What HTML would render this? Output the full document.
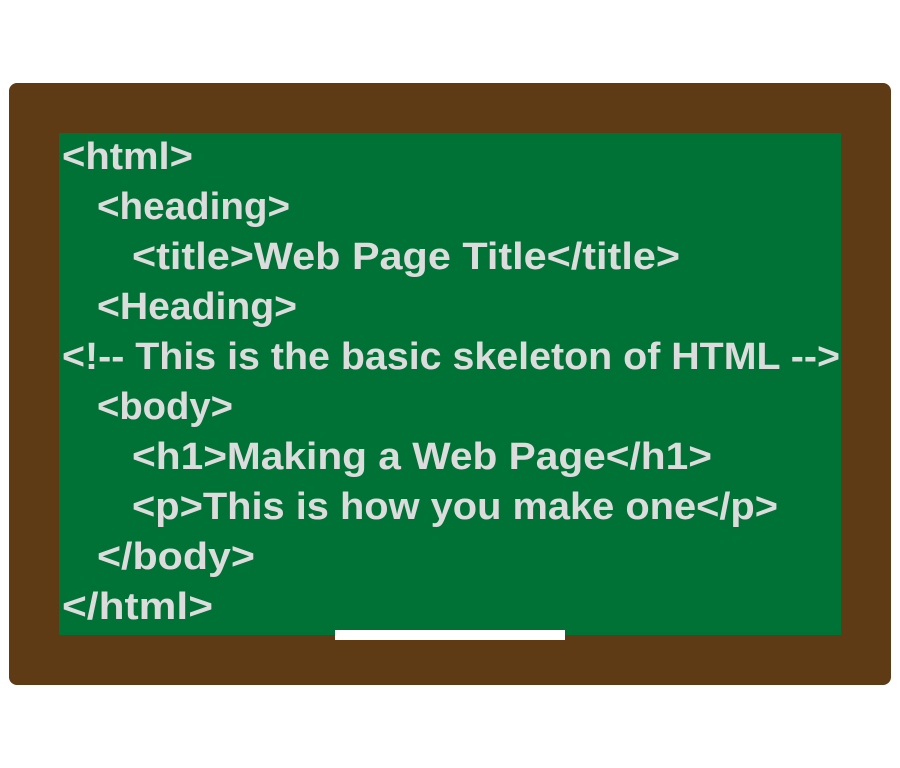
<!DOCTYPE html>
<html><head><meta charset="utf-8"><style>
html,body{margin:0;padding:0;background:#fff;width:900px;height:768px;overflow:hidden}
</style></head><body>
<svg width="900" height="768" xmlns="http://www.w3.org/2000/svg">
<rect x="9" y="83" width="882" height="602" rx="8" fill="#5e3a15"/>
<rect x="59" y="133" width="782" height="502" fill="#007236"/>
<rect x="335" y="630" width="230" height="10" fill="#fff"/>
<g font-family="Liberation Sans, sans-serif" font-weight="bold" font-size="38" fill="#dcdcdc" lengthAdjust="spacingAndGlyphs">
<text x="62" y="169" textLength="131" lengthAdjust="spacingAndGlyphs">&lt;html&gt;</text>
<text x="97" y="219" textLength="193" lengthAdjust="spacingAndGlyphs">&lt;heading&gt;</text>
<text x="132" y="269" textLength="548" lengthAdjust="spacingAndGlyphs">&lt;title&gt;Web Page Title&lt;/title&gt;</text>
<text x="97" y="319" textLength="200" lengthAdjust="spacingAndGlyphs">&lt;Heading&gt;</text>
<text x="62" y="369" textLength="778" lengthAdjust="spacingAndGlyphs">&lt;!-- This is the basic skeleton of HTML --&gt;</text>
<text x="97" y="419" textLength="136" lengthAdjust="spacingAndGlyphs">&lt;body&gt;</text>
<text x="132" y="469" textLength="580" lengthAdjust="spacingAndGlyphs">&lt;h1&gt;Making a Web Page&lt;/h1&gt;</text>
<text x="132" y="519" textLength="646" lengthAdjust="spacingAndGlyphs">&lt;p&gt;This is how you make one&lt;/p&gt;</text>
<text x="97" y="569" textLength="158" lengthAdjust="spacingAndGlyphs">&lt;/body&gt;</text>
<text x="62" y="619" textLength="151" lengthAdjust="spacingAndGlyphs">&lt;/html&gt;</text>
</g>
</svg>
</body></html>
